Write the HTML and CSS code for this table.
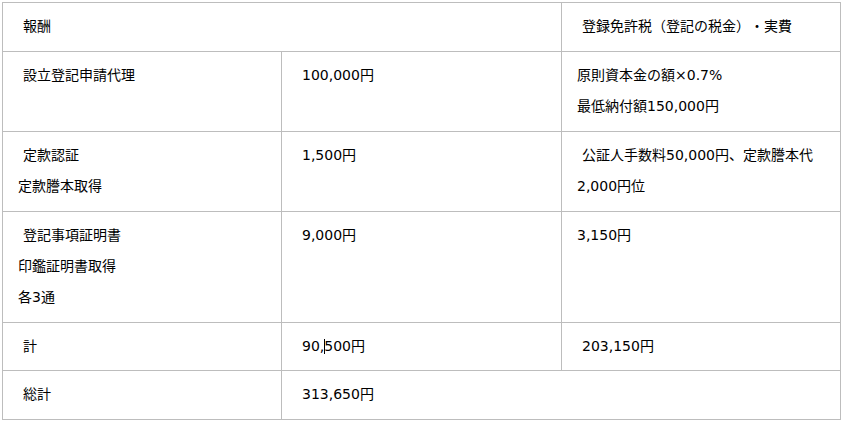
FILE: index.html
```html
<!DOCTYPE html>
<html lang="ja">
<head>
<meta charset="utf-8">
<title>費用</title>
<link rel="stylesheet" href="styles.css">
</head>
<body>
<table class="fees">
  <colgroup><col class="c1"><col class="c2"><col class="c3"></colgroup>
  <tr>
    <td colspan="2"><div class="line ind">報酬</div></td>
    <td><div class="line ind">登録免許税（登記の税金）・実費</div></td>
  </tr>
  <tr>
    <td><div class="line ind">設立登記申請代理</div></td>
    <td><div class="line ind">100,000円</div></td>
    <td><div class="line">原則資本金の額×0.7%</div><div class="line">最低納付額150,000円</div></td>
  </tr>
  <tr>
    <td><div class="line ind">定款認証</div><div class="line">定款謄本取得</div></td>
    <td><div class="line ind">1,500円</div></td>
    <td><div class="line ind">公証人手数料50,000円、定款謄本代</div><div class="line">2,000円位</div></td>
  </tr>
  <tr>
    <td><div class="line ind">登記事項証明書</div><div class="line">印鑑証明書取得</div><div class="line">各3通</div></td>
    <td><div class="line ind">9,000円</div></td>
    <td><div class="line">3,150円</div></td>
  </tr>
  <tr class="sum">
    <td><div class="line ind">計</div></td>
    <td><div class="line ind">90,<span class="caret"></span>500円</div></td>
    <td><div class="line ind">203,150円</div></td>
  </tr>
  <tr>
    <td><div class="line ind">総計</div></td>
    <td colspan="2"><div class="line ind">313,650円</div></td>
  </tr>
</table>
</body>
</html>
```

FILE: styles.css
```css
html, body {
  background: #fff;
}
body {
  margin: 2px;
  font-family: "DejaVu Sans", "Noto Sans CJK JP", sans-serif;
  font-size: 14px;
  color: #000;
  text-spacing-trim: space-all;
}
.fees {
  border-collapse: collapse;
  table-layout: fixed;
  width: 838px;
}
.c1 { width: 279px; }
.c2 { width: 280px; }
.c3 { width: 279px; }
.fees td {
  border: 1px solid #bdbdbd;
  padding: 8px 10px 9px 15px;
  vertical-align: top;
  text-align: left;
}
.fees tr.sum td {
  padding-bottom: 8px;
}
.line {
  line-height: 31px;
  white-space: nowrap;
}
.ind {
  padding-left: 5px;
}
.caret {
  display: inline-block;
  width: 0;
  height: 15px;
  border-left: 1px solid #000;
  margin-right: -1px;
  vertical-align: -3px;
}
```
